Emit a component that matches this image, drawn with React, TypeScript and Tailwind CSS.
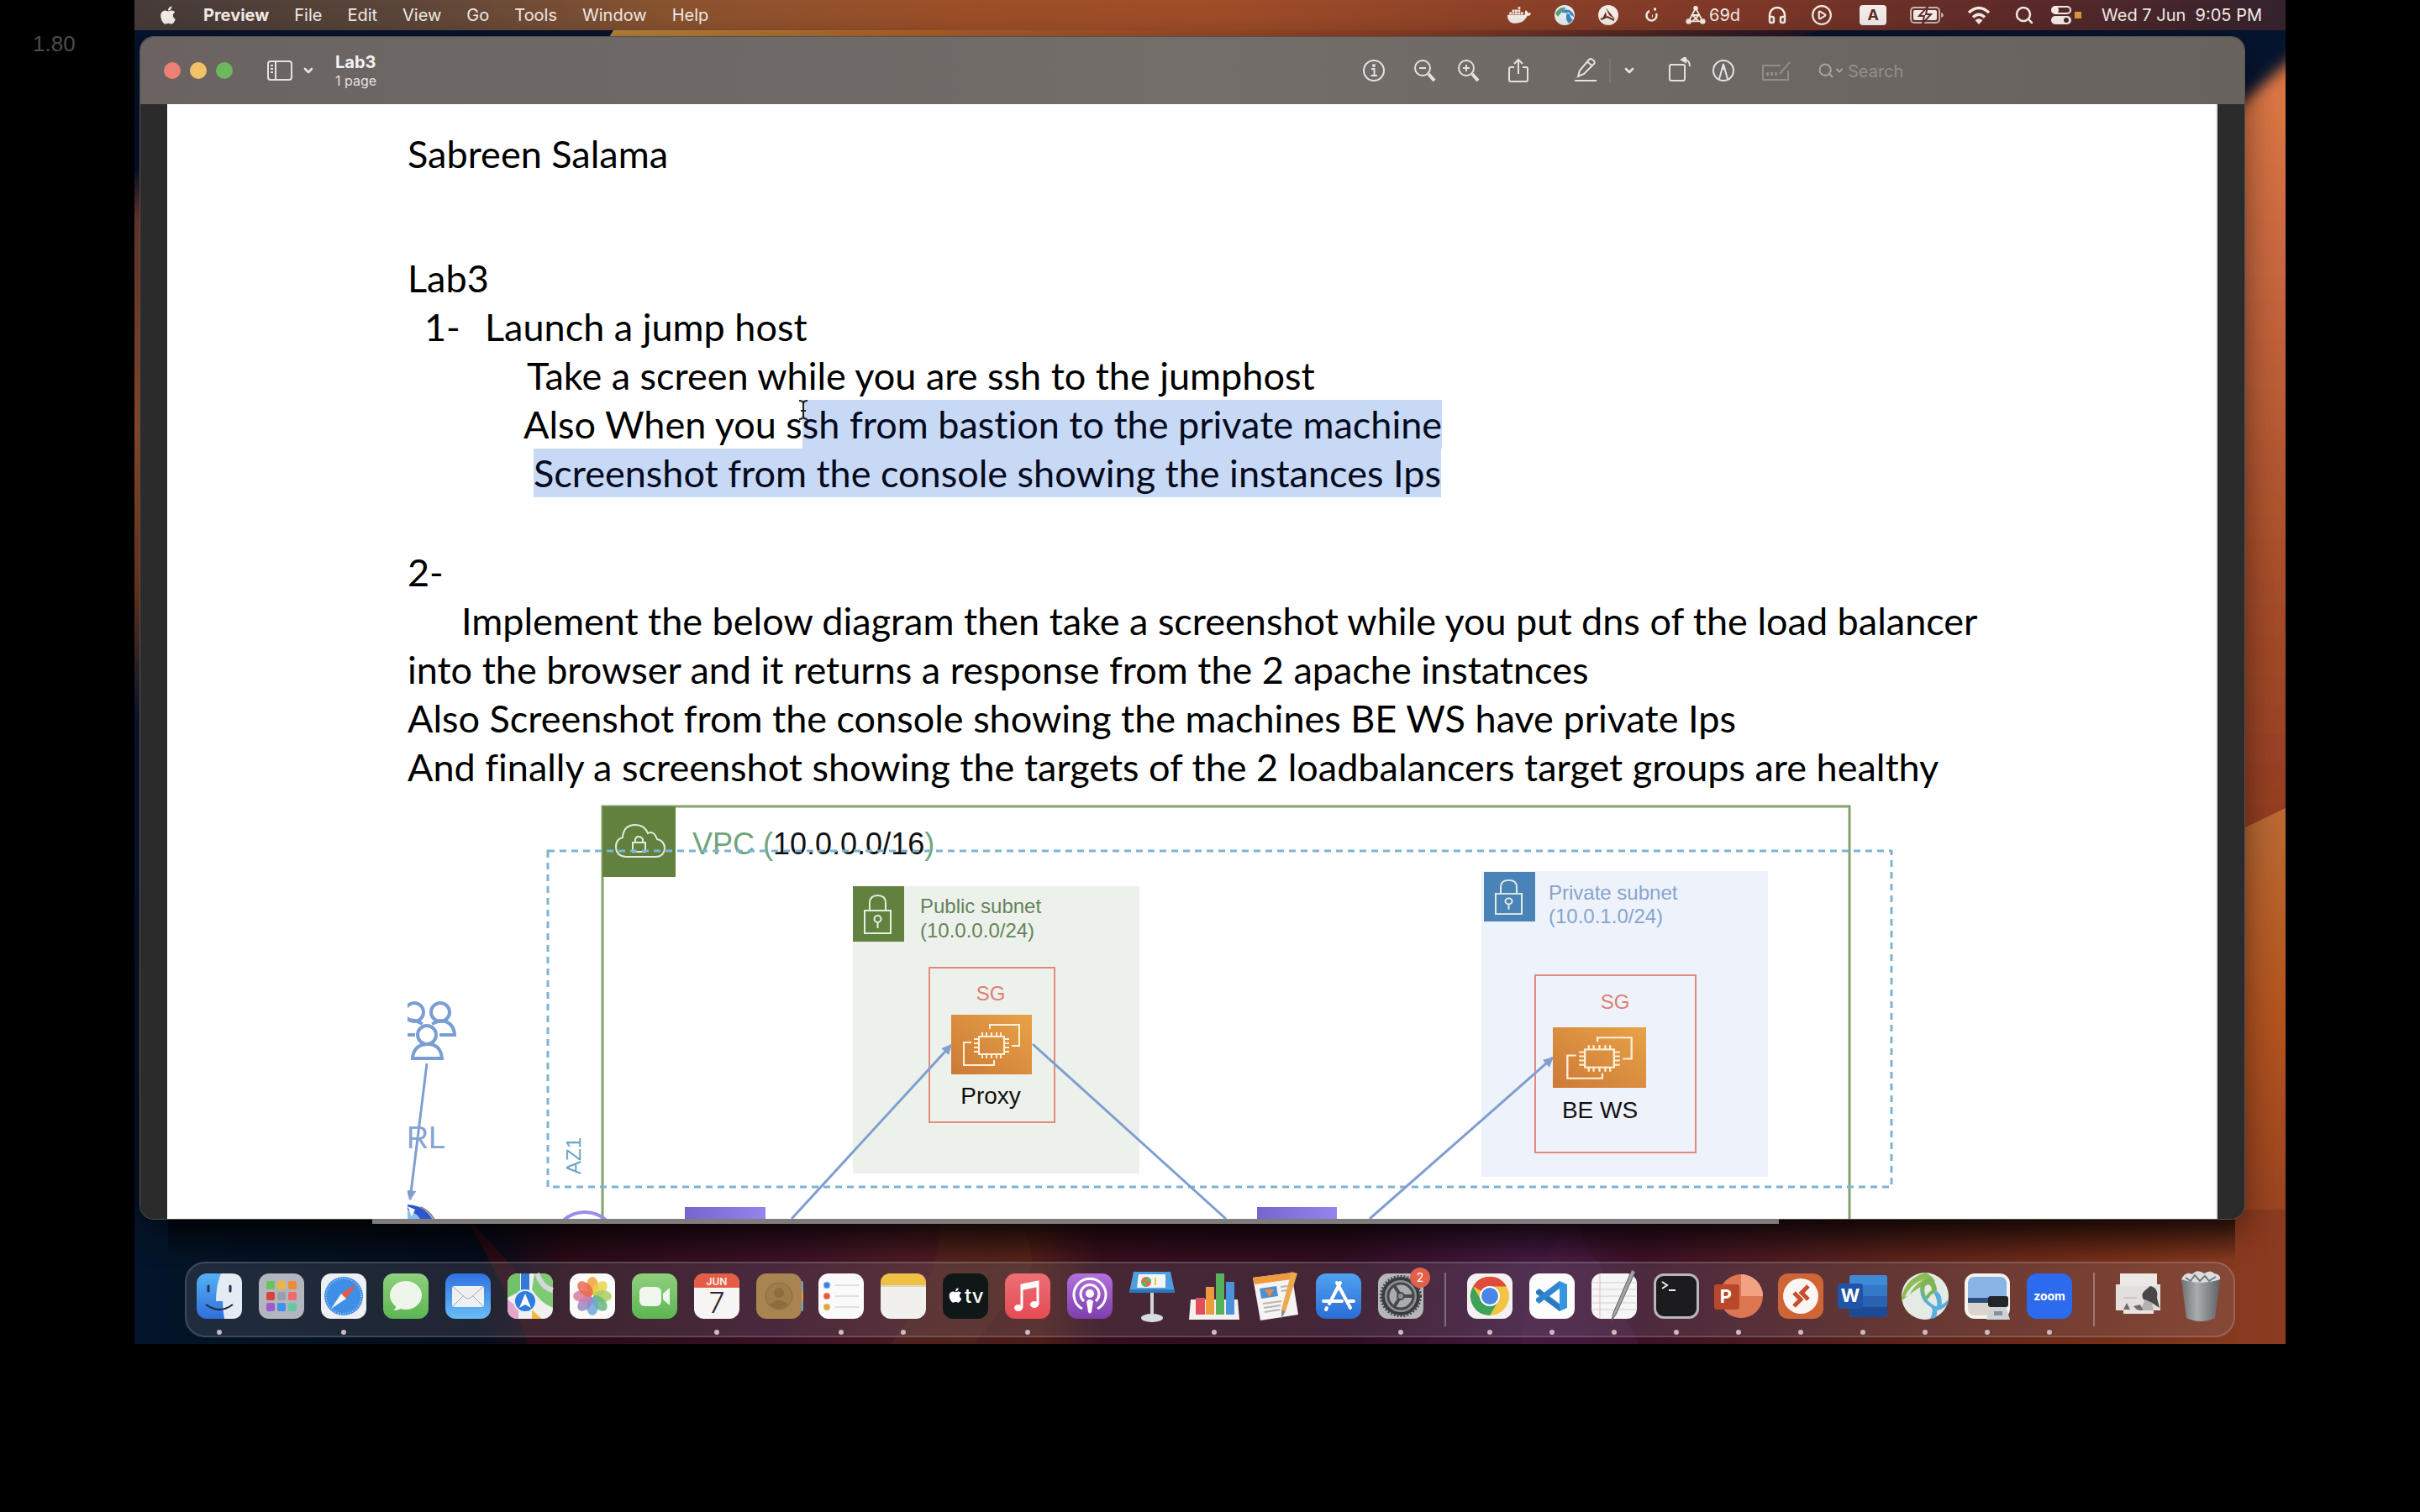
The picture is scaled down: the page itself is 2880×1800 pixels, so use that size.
import type { ReactNode } from 'react';
import { FaApple, FaDocker } from 'react-icons/fa';
import {
  ChevronDown,
  CirclePlay,
  Headphones,
  Search,
} from 'lucide-react';

const menus = ['File', 'Edit', 'View', 'Go', 'Tools', 'Window', 'Help'];

function Wallpaper() {
  return (
    <svg
      className="absolute inset-0 h-full w-full"
      viewBox="0 0 2560 1600"
      preserveAspectRatio="none"
      aria-hidden="true"
    >
      <defs>
        <linearGradient id="wp-left" x1="0" y1="0" x2="0" y2="1">
          <stop offset="0" stopColor="#04142f" />
          <stop offset="0.1" stopColor="#051230" />
          <stop offset="0.14" stopColor="#7a3f35" />
          <stop offset="0.3" stopColor="#a5562f" />
          <stop offset="0.42" stopColor="#7d3f22" />
          <stop offset="0.52" stopColor="#0a1a38" />
          <stop offset="1" stopColor="#04101f" />
        </linearGradient>
        <linearGradient id="wp-right" x1="0" y1="0" x2="0" y2="1">
          <stop offset="0" stopColor="#b8582f" />
          <stop offset="0.06" stopColor="#dc7744" />
          <stop offset="0.25" stopColor="#c96840" />
          <stop offset="0.6" stopColor="#a84f2a" />
          <stop offset="1" stopColor="#8d3620" />
        </linearGradient>
        <linearGradient id="wp-right2" x1="0" y1="0" x2="0" y2="1">
          <stop offset="0" stopColor="#bb6a33" />
          <stop offset="0.4" stopColor="#b3531f" />
          <stop offset="1" stopColor="#893a22" />
        </linearGradient>
        <linearGradient id="wp-bottom" x1="0" y1="0" x2="1" y2="0">
          <stop offset="0" stopColor="#04152a" />
          <stop offset="0.1" stopColor="#04101f" />
          <stop offset="0.16" stopColor="#050c1c" />
          <stop offset="0.2" stopColor="#2a0b16" />
          <stop offset="0.3" stopColor="#3a1125" />
          <stop offset="0.36" stopColor="#4b1a22" />
          <stop offset="0.42" stopColor="#4f1d18" />
          <stop offset="0.45" stopColor="#360e1c" />
          <stop offset="0.56" stopColor="#310d20" />
          <stop offset="0.65" stopColor="#431a40" />
          <stop offset="0.7" stopColor="#3d1126" />
          <stop offset="0.8" stopColor="#56201c" />
          <stop offset="0.92" stopColor="#762e18" />
          <stop offset="1" stopColor="#8b3d22" />
        </linearGradient>
        <linearGradient id="wp-shade" x1="0" y1="0" x2="0" y2="1">
          <stop offset="0" stopColor="#000" stopOpacity="0.7" />
          <stop offset="1" stopColor="#000" stopOpacity="0" />
        </linearGradient>
        <linearGradient id="wp-top" x1="0" y1="0" x2="1" y2="0">
          <stop offset="0" stopColor="#c08a3c" />
          <stop offset="0.3" stopColor="#b4602a" />
          <stop offset="0.7" stopColor="#8a3c26" />
          <stop offset="1" stopColor="#1c1426" />
        </linearGradient>
        <filter id="wp-soft" x="-50%" y="-5%" width="200%" height="110%">
          <feGaussianBlur stdDeviation="8" />
        </filter>
      </defs>
      <rect width="2560" height="1600" fill="#06152f" />
      <path d="M570 36H2010L1900 60H555Z" fill="url(#wp-top)" />
      <rect y="44" width="60" height="1556" fill="url(#wp-left)" />
      <path d="M2440 150L2500 130L2600 40V1100H2440Z" fill="url(#wp-right)" filter="url(#wp-soft)" />
      <path d="M2460 1010L2560 962V1600H2460Z" fill="url(#wp-right2)" />
      <path d="M0 1440H2560V1600H0Z" fill="url(#wp-bottom)" />
      <path d="M2500 1440H2560V1600H2500Z" fill="#8c3a1e" opacity="0.45" />
      <path d="M395 1450Q440 1490 520 1600H470Q440 1530 395 1450Z" fill="#2a0b16" />
      <path d="M900 1600Q960 1520 960 1450H1050Q1070 1480 1068 1510L1000 1600Z" fill="#5a2c18" opacity="0.4" />
      <path d="M1715 1450Q1725 1490 1742 1502L1790 1600H1650Q1660 1500 1715 1450Z" fill="#4a1b44" opacity="0.5" />
      <rect x="40" y="1448" width="2460" height="52" fill="url(#wp-shade)" />
    </svg>
  );
}

function MenuBar() {
  return (
    <header className="relative flex h-9 shrink-0 items-center px-7 pb-px text-xl text-[#f4ece6]">
      <div className="absolute inset-0 flex" aria-hidden="true">
        <div className="flex-1 bg-linear-to-r from-[#463b38] via-[#5c463a] to-[#8a532f]" />
        <div className="flex-1 bg-linear-to-r from-[#8a532f] via-[#9c5028] to-[#a04e28]" />
        <div className="flex-1 bg-linear-to-r from-[#a04e28] to-[#7e3828]" />
        <div className="flex-1 bg-linear-to-r from-[#7e3828] via-[#5d2a29] to-[#33222d]" />
      </div>
      <nav className="relative flex items-center gap-[30px]" aria-label="Menu bar">
        <button aria-label="Apple menu">
          <FaApple size={24} />
        </button>
        <button className="font-bold">Preview</button>
        {menus.map((m) => (
          <button key={m}>
            {m}
          </button>
        ))}
      </nav>
      <div className="relative ml-auto flex items-center">
        <FaDocker size={28} className="mr-7" />
        <svg viewBox="0 0 24 24" className="mr-7 h-6 w-6">
          <circle cx="12" cy="12" r="12" fill="#e6eef0" />
          <path d="M1 10Q6 1 14 3Q8 8 4 14Z" fill="#5f9a72" />
          <path d="M9 7Q17 3 22 10L24 15Q16 8 9 9ZM15 9Q12 17 17 22L22 18Q18 15 18 9Z" fill="#3f86c4" />
        </svg>
        <svg viewBox="0 0 24 24" className="mr-7 h-6 w-6">
          <circle cx="12" cy="12" r="12" fill="#f4ece6" />
          <path d="M9 3L20 17L13 12ZM4 18L9 8L10 13Z" fill="#6a3024" />
          <path d="M3 17L11 14L19 18" fill="none" stroke="#6a3024" strokeWidth="2" />
        </svg>
        <svg viewBox="0 0 24 24" className="mr-7 h-6 w-6">
          <path d="M9 7A6 6 0 1 0 17 10" fill="none" stroke="currentColor" strokeWidth="2.5" />
          <path d="M14 5L17 5M12 13h1" stroke="currentColor" strokeWidth="3" />
        </svg>
        <svg viewBox="0 0 26 24" className="mr-1 h-6 w-6">
          <path
            d="M13 3L4 20H22ZM9 12L17 20M17 12L9 20M9 12H17"
            fill="none"
            stroke="currentColor"
            strokeWidth="2"
          />
          <circle cx="13" cy="3" r="3" fill="currentColor" />
          <circle cx="4" cy="20" r="3.5" fill="currentColor" />
          <circle cx="22" cy="20" r="3.5" fill="currentColor" />
        </svg>
        <span className="mr-8">69d</span>
        <Headphones size={24} strokeWidth={2.5} className="mr-7" />
        <CirclePlay size={26} strokeWidth={2} className="mr-8" />
        <span className="mr-7 flex h-6 w-8 items-center justify-center rounded-sm bg-[#f4ece8] text-lg font-bold text-[#5c2c28]">
          A
        </span>
        <svg viewBox="0 0 40 22" className="mr-7 h-6 w-10">
          <rect x="1" y="2" width="34" height="18" rx="4" fill="none" stroke="currentColor" strokeWidth="2" opacity="0.7" />
          <rect x="4" y="5" width="28" height="12" rx="2" fill="currentColor" />
          <path d="M37 8V14Q40 13 40 11T37 8Z" fill="currentColor" opacity="0.7" />
          <path d="M21 1L11 12H17L15 21L25 10H19Z" fill="currentColor" stroke="#5c2c28" strokeWidth="2" />
        </svg>
        <svg viewBox="0 0 28 24" className="mr-7 h-6 w-7" fill="none" stroke="currentColor" strokeWidth="3.5">
          <path d="M2 9Q14 -2 26 9" />
          <path d="M7 14.500Q14 8 21 14.500" />
          <path d="M14 23L9.500 18Q14 14.500 18.500 18Z" fill="currentColor" stroke="none" />
        </svg>
        <Search size={24} strokeWidth={2.500} className="mr-5" />
        <svg viewBox="0 0 24 24" className="mr-1 h-6 w-6">
          <rect x="1" y="2" width="22" height="8" rx="4" fill="none" stroke="currentColor" strokeWidth="2" />
          <circle cx="5" cy="6" r="4" fill="currentColor" />
          <rect x="0" y="13" width="24" height="10" rx="5" fill="currentColor" />
          <circle cx="18" cy="18" r="3" fill="#4a2629" />
        </svg>
        <span className="mr-6 h-2 w-2 bg-[#d69a3a]" />
        <time className="whitespace-pre">Wed 7 Jun  9:05 PM</time>
      </div>
    </header>
  );
}

function Toolbar() {
  return (
    <div className="flex h-20 shrink-0 items-center bg-linear-to-r from-[#6a6362] via-[#736e6a] to-[#68625e] pl-7 text-[#e4e1df]">
      <div className="flex gap-[11px]">
        <button aria-label="Close" className="h-5 w-5 rounded-full bg-[#ec8074]" />
        <button aria-label="Minimise" className="h-5 w-5 rounded-full bg-[#f3c267]" />
        <button aria-label="Zoom window" className="h-5 w-5 rounded-full bg-[#6db85d]" />
      </div>
      <button aria-label="Sidebar" className="ml-10 flex items-center gap-2.5">
        <svg viewBox="0 0 30 24" className="h-6 w-8" fill="none" stroke="currentColor" strokeWidth="2">
          <rect x="1" y="1" width="28" height="22" rx="3" />
          <path d="M10 1V23M4 6H7M4 10H7M4 14H7" />
        </svg>
        <ChevronDown size={16} strokeWidth={4} />
      </button>
      <div className="ml-6 flex flex-col">
        <h1 className="text-xl leading-6 font-bold text-[#f5f3f2]">Lab3</h1>
        <p className="text-base leading-5">1 page</p>
      </div>
      <div className="ml-auto flex items-center">
        <button aria-label="Info" className="mr-7">
          <svg viewBox="0 0 32 32" className="h-8 w-8" fill="none" stroke="currentColor" strokeWidth="2">
            <circle cx="16" cy="16" r="12" />
            <path d="M13 14H16.500V22M12.500 22H20" />
            <circle cx="16" cy="10" r="1" fill="currentColor" />
          </svg>
        </button>
        <button aria-label="Zoom out" className="mr-5">
          <ToolGlass plus={false} />
        </button>
        <button aria-label="Zoom in" className="mr-7">
          <ToolGlass plus />
        </button>
        <button aria-label="Share" className="mr-12">
          <svg viewBox="0 0 32 32" className="h-8 w-8" fill="none" stroke="currentColor" strokeWidth="2">
            <path d="M11 12H7Q5 12 5 14V27Q5 29 7 29H25Q27 29 27 27V14Q27 12 25 12H21M16 20V3M11 8L16 3L21 8" />
          </svg>
        </button>
        <button aria-label="Highlight" className="mr-3">
          <svg viewBox="0 0 32 32" className="h-8 w-8" fill="none" stroke="currentColor" strokeWidth="2">
            <path d="M7 23L9 16L20 3Q22 1 25 3.500T26 8L14 20ZM18 5.500L23.500 10" />
            <path d="M3 28H29" />
          </svg>
        </button>
        <span className="mr-3.5 h-7 w-0.5 bg-[#7d7875]" />
        <button aria-label="Highlight colours" className="mr-9">
          <ChevronDown size={16} strokeWidth={4} />
        </button>
        <button aria-label="Rotate" className="mr-5">
          <svg viewBox="0 0 32 32" className="h-8 w-8" fill="none" stroke="currentColor" strokeWidth="2">
            <rect x="4" y="9" width="18" height="19" rx="2" />
            <path d="M21 3Q28 3 28 11" />
            <path d="M18 3L23 0V6Z" fill="currentColor" />
          </svg>
        </button>
        <button aria-label="Markup" className="mr-7">
          <svg viewBox="0 0 32 32" className="h-8 w-8" fill="none" stroke="currentColor" strokeWidth="2">
            <circle cx="16" cy="16" r="12" />
            <path d="M11 26L15 12Q16 10 17 12L21 26" />
            <path d="M14.500 14H17.500L16 8Z" fill="currentColor" />
          </svg>
        </button>
        <button aria-label="Fill in form" className="mr-8 text-[#928d89]" disabled>
          <svg viewBox="0 0 36 32" className="h-8 w-9" fill="none" stroke="currentColor" strokeWidth="2">
            <path d="M24 10H3V27H33V16M23 20L35 6" />
            <path d="M7 20H20" strokeWidth="4" strokeDasharray="3 2" />
          </svg>
        </button>
        <label className="flex w-[508px] items-center text-[#a8a39f]">
          <Search size={20} strokeWidth={2.500} />
          <ChevronDown size={12} strokeWidth={4} className="mr-1" />
          <input
            type="search"
            aria-label="Search"
            placeholder="Search"
            className="w-40 bg-transparent pt-0.5 text-xl text-[#a8a39f] outline-none placeholder:text-[#948f8b]"
          />
        </label>
      </div>
    </div>
  );
}

function ToolGlass({ plus }: { plus: boolean }) {
  return (
    <svg viewBox="0 0 32 32" className="h-8 w-8" fill="none" stroke="currentColor" strokeWidth="2">
      <circle cx="14" cy="13" r="9" />
      <path d={plus ? 'M10 13H18M14 9V17' : 'M10 13H18'} />
      <path d="M21 20L28 28" strokeWidth="4" />
    </svg>
  );
}

function Ec2({ x, y, w, h }: { x: number; y: number; w: number; h: number }) {
  return (
    <svg x={x} y={y} width={w} height={h} viewBox="0 0 96 71" preserveAspectRatio="none">
      <rect width="96" height="71" fill="url(#ec2)" />
      <g fill="none" stroke="#fff0d8" strokeWidth="2">
        <rect x="33" y="26" width="30" height="21" />
        <path d="M37 21V26M42 21V26M48 21V26M54 21V26M59 21V26M37 47V52M42 47V52M48 47V52M54 47V52M59 47V52M27 29H33M27 34H33M27 39H33M27 44H33M63 29H69M63 34H69M63 39H69M63 44H69" />
        <path d="M46 17V12H81V37H72M24 33H15V60H51V54" />
      </g>
    </svg>
  );
}

function Lock({ x, y, h, fill }: { x: number; y: number; h: number; fill: string }) {
  return (
    <svg x={x} y={y} width={61} height={h} viewBox="0 0 61 66" preserveAspectRatio="none">
      <rect width="61" height="66" fill={fill} />
      <g fill="none" stroke="#e3efe0" strokeWidth="2">
        <rect x="14" y="29" width="31" height="27" />
        <path d="M20 29V20Q20 11 29.500 11T39 20V29M29.500 43V50" />
        <circle cx="29.500" cy="39" r="4" />
      </g>
    </svg>
  );
}

function Diagram() {
  return (
    <svg
      viewBox="485 944 1800 540"
      className="mt-0.5 block h-[540px] w-[1800px] shrink-0"
      fontFamily="Liberation Sans, Arial, sans-serif"
      role="img"
      aria-label="VPC network diagram"
    >
      <defs>
        <linearGradient id="ec2" x1="0" y1="1" x2="1" y2="0">
          <stop offset="0" stopColor="#cc7a36" />
          <stop offset="1" stopColor="#e8a248" />
        </linearGradient>
        <linearGradient id="elb" x1="0" y1="0" x2="1" y2="0">
          <stop offset="0" stopColor="#7565cc" />
          <stop offset="1" stopColor="#9684ee" />
        </linearGradient>
        <marker id="head" viewBox="0 0 10 10" refX="9" refY="5" markerWidth="16" markerHeight="12" markerUnits="userSpaceOnUse" orient="auto">
          <path d="M0 0L10 5L0 10Z" fill="#7f9fd0" />
        </marker>
      </defs>

      <rect x="1015" y="1055" width="341" height="342" fill="#edf1eb" />
      <rect x="1763" y="1037" width="341" height="364" fill="#eef2fa" />
      <path d="M717 1500V960H2201V1500" fill="none" stroke="#83a26c" strokeWidth="3" />

      <rect x="717" y="960" width="87" height="84" fill="#62813f" />
      <g fill="none" stroke="#e0ecd8" strokeWidth="2">
        <path d="M745 1020Q733 1019 733 1008Q733 999 741 997Q742 982 756 982Q767 982 771 992Q778 988 782 999Q791 1001 791 1010Q790 1020 780 1020Z" />
        <rect x="753" y="1003" width="15" height="11" />
        <path d="M756 1003V999Q757 996 760 996T765 999V1003" />
      </g>
      <text x="824" y="1017" fontSize="36" fill="#6fa57c">
        VPC (<tspan fill="#111">10.0.0.0/16</tspan>)
      </text>
      <rect x="652" y="1013" width="1599" height="400" fill="none" stroke="#7db4d4" strokeWidth="3" strokeDasharray="8 6" />
      <text x="0" y="0" fontSize="24" fill="#6aa3c2" transform="translate(691 1398) rotate(-90)">
        AZ1
      </text>

      <Lock x={1015} y={1055} h={66} fill="#62813f" />
      <g fontSize="24" fill="#64835a">
        <text x="1095" y="1087">Public subnet</text>
        <text x="1095" y="1116">(10.0.0.0/24)</text>
      </g>
      <rect x="1106" y="1152" width="149" height="184" fill="none" stroke="#e58980" strokeWidth="2" />
      <text x="1179" y="1191" fontSize="24" textAnchor="middle" fill="#e07c76">SG</text>
      <Ec2 x={1132} y={1208} w={96} h={71} />
      <text x="1179" y="1314" fontSize="28" textAnchor="middle" fill="#111">Proxy</text>

      <Lock x={1766} y={1038} h={59} fill="#4a83b8" />
      <g fontSize="24" fill="#86a4cf">
        <text x="1843" y="1071">Private subnet</text>
        <text x="1843" y="1099">(10.0.1.0/24)</text>
      </g>
      <rect x="1827" y="1161" width="191" height="211" fill="none" stroke="#e58980" strokeWidth="2" />
      <text x="1922" y="1201" fontSize="24" textAnchor="middle" fill="#e07c76">SG</text>
      <Ec2 x={1848} y={1223} w={111} h={72} />
      <text x="1904" y="1331" fontSize="28" textAnchor="middle" fill="#111">BE WS</text>

      <g stroke="#7f9fd0" strokeWidth="3" fill="none">
        <path d="M942 1451L1132 1244" markerEnd="url(#head)" />
        <path d="M1229 1243L1459 1451" />
        <path d="M1630 1451L1848 1259" markerEnd="url(#head)" />
        <path d="M508 1266L488 1428" markerEnd="url(#head)" />
      </g>
      <rect x="815" y="1437" width="96" height="40" fill="url(#elb)" />
      <rect x="1496" y="1437" width="95" height="40" fill="url(#elb)" />
      <circle cx="696" cy="1481" r="38" fill="none" stroke="#9b8ce8" strokeWidth="4" />

      <g stroke="#7b9ed2" strokeWidth="4" fill="none">
        <circle cx="493" cy="1205" r="11" />
        <circle cx="524" cy="1205" r="11" />
        <circle cx="508" cy="1232" r="11" />
        <path d="M491 1260Q492 1244 508 1243T526 1260ZM523 1232H541Q540 1216 524 1215L514 1219M485 1214L494 1215L503 1219M485 1232H494" />
      </g>
      <text x="484" y="1367" fontSize="36" fill="#86a3d3">RL</text>
      <g>
        <circle cx="485" cy="1468" r="34" fill="#2d56cf" />
        <path d="M485 1440L496 1446L506 1458H485Z" fill="#8cc2f0" />
        <path d="M485 1436L494 1440L490 1448Z" fill="#fff" />
        <path d="M500 1437Q512 1441 519 1456" fill="none" stroke="#8a8a8a" strokeWidth="2" />
      </g>
    </svg>
  );
}

function Mark({ children }: { children: ReactNode }) {
  return <mark className="inline-block bg-[#c8d9f6] text-[#050a1c]">{children}</mark>;
}

function Document() {
  return (
    <div className="flex min-h-0 flex-1 overflow-hidden bg-[#2c2b2c] px-8">
      <article className="flex-1 overflow-hidden border-r-2 border-[#e2e2e2] bg-white pt-[30px] pl-[286px] font-[Lato,sans-serif] text-[45px] leading-[58px] whitespace-nowrap text-black [font-variant-ligatures:none]">
        <p>Sabreen Salama</p>
        <h2 className="mt-[90px]">Lab3</h2>
        <div className="flex pl-5">
          <span className="w-18">1-</span>
          <p>Launch a jump host</p>
        </div>
        <p className="pl-[142px]">Take a screen while you are ssh to the jumphost</p>
        <p className="relative pl-[138px]">
          Also When you s<Mark>sh from bastion to the private machine</Mark>
          <svg viewBox="0 0 14 24" className="absolute top-0 left-[464px] h-6 w-3.5" fill="none" stroke="#222" strokeWidth="2">
            <path d="M2 1Q7 1 7 5Q7 1 12 1M7 4V20M2 23Q7 23 7 19Q7 23 12 23M4 13H10" />
          </svg>
        </p>
        <p className="pl-[150px]">
          <Mark>Screenshot from the console showing the instances Ips</Mark>
        </p>
        <p className="mt-[60px]">2-</p>
        <p className="pl-[64px]">Implement the below diagram then take a screenshot while you put dns of the load balancer</p>
        <p>into the browser and it returns a response from the 2 apache instatnces</p>
        <p>Also Screenshot from the console showing the machines BE WS have private Ips</p>
        <p>And finally a screenshot showing the targets of the 2 loadbalancers target groups are healthy</p>
        <Diagram />
      </article>
    </div>
  );
}

function Tile({ fill, children }: { fill: string; children?: ReactNode }) {
  return (
    <>
      <rect x="5" y="5" width="54" height="54" rx="12" fill={fill} />
      {children}
    </>
  );
}

const petals = ['#f2a23c', '#e9d34a', '#a9cf62', '#63b77c', '#6fa6d8', '#9b86c9', '#d97a9a', '#ea6a4c'];
const launchpad = ['#6cc35a', '#edb63e', '#ee8d35', '#d9443a', '#9aa0aa', '#ee6a6c', '#9d5bd0', '#3f93ee', '#62c9a0'];

type App = { name: string; open?: boolean; badge?: string; art: ReactNode };

const apps: App[] = [
  {
    name: 'Finder',
    open: true,
    art: (
      <Tile fill="url(#d-blue)">
        <path d="M34 5H47Q59 5 59 17V47Q59 59 47 59H38Q36 48 36 38H28Q28 20 34 5Z" fill="#e4ebf3" />
        <path d="M19 20V26M45 20V26" stroke="#1d3552" strokeWidth="3" strokeLinecap="round" />
        <path d="M16 42Q32 54 48 42" fill="none" stroke="#1d2a3c" strokeWidth="2" />
      </Tile>
    ),
  },
  {
    name: 'Launchpad',
    art: (
      <Tile fill="#b3b6be">
        {launchpad.map((c, i) => (
          <rect key={c} x={14 + (i % 3) * 13} y={14 + Math.floor(i / 3) * 13} width="10" height="10" rx="2" fill={c} />
        ))}
      </Tile>
    ),
  },
  {
    name: 'Safari',
    open: true,
    art: (
      <Tile fill="#eeeff1">
        <circle cx="32" cy="32" r="23" fill="#3f8fe6" />
        <circle cx="32" cy="32" r="21" fill="none" stroke="#9cc8f5" strokeWidth="2" strokeDasharray="1 2" />
        <path d="M48 17L35 35L29 29Z" fill="#e8584a" />
        <path d="M17 47L29 29L35 35Z" fill="#f2f4f6" />
      </Tile>
    ),
  },
  {
    name: 'Messages',
    art: (
      <Tile fill="url(#d-green)">
        <ellipse cx="32" cy="31" rx="19" ry="17" fill="#eef6ea" />
        <path d="M20 42Q21 47 17 49Q25 49 28 45Z" fill="#eef6ea" />
      </Tile>
    ),
  },
  {
    name: 'Mail',
    art: (
      <Tile fill="url(#d-mail)">
        <rect x="13" y="20" width="38" height="25" rx="3" fill="#eef1f4" />
        <path d="M14 21L29 34Q32 36 35 34L50 21M14 44L26 32M50 44L38 32" fill="none" stroke="#a2a8b0" strokeWidth="1" />
      </Tile>
    ),
  },
  {
    name: 'Maps',
    art: (
      <Tile fill="#f0f1ee">
        <path d="M5 17Q5 9 12 6L20 5V26L5 34Z" fill="#72c267" />
        <path d="M37 5H47Q59 5 59 17V46Q44 40 34 24Z" fill="#7fcb74" />
        <path d="M40 5Q46 22 59 25" fill="none" stroke="#d5d7da" strokeWidth="6" />
        <path d="M5 36L18 46V59Q5 59 5 47Z" fill="#e4a6cf" />
        <path d="M34 59V48L46 59Z" fill="#f2bb3f" />
        <path d="M21 5H31V30H21Z" fill="#3478d8" />
        <circle cx="26" cy="38" r="13" fill="#2f7be0" stroke="#e9eef5" strokeWidth="2" />
        <path d="M26 29L33 46L26 42L19 46Z" fill="#fff" />
      </Tile>
    ),
  },
  {
    name: 'Photos',
    art: (
      <Tile fill="#fbfbfa">
        {petals.map((c, i) => (
          <ellipse key={c} cx="32" cy="20" rx="7" ry="11" fill={c} opacity="0.85" transform={`rotate(${i * 45} 32 32)`} />
        ))}
      </Tile>
    ),
  },
  {
    name: 'FaceTime',
    art: (
      <Tile fill="url(#d-green)">
        <rect x="14" y="21" width="26" height="23" rx="6" fill="#eff7ec" />
        <path d="M42 29L50 22V43L42 36Z" fill="#eff7ec" />
      </Tile>
    ),
  },
  {
    name: 'Calendar',
    open: true,
    art: (
      <Tile fill="#f7f5f4">
        <path d="M5 22V17Q5 5 17 5H47Q59 5 59 17V22Z" fill="#e35d47" />
        <text x="32" y="19" fontSize="12" fontWeight="700" textAnchor="middle" fill="#fbe5e0">JUN</text>
        <text x="32" y="52" fontSize="34" fontWeight="300" textAnchor="middle" fill="#2d2d2d">7</text>
      </Tile>
    ),
  },
  {
    name: 'Contacts',
    art: (
      <>
        <rect x="50" y="14" width="11" height="36" rx="2" fill="#6aa6bd" />
        <rect x="50" y="26" width="11" height="12" fill="#d99a42" />
        <Tile fill="#a78450">
          <circle cx="32" cy="32" r="16" fill="#a07c48" stroke="#8e6d3c" strokeWidth="1" />
          <circle cx="32" cy="28" r="6" fill="#8e6d3c" />
          <path d="M21 42Q32 32 43 42Q32 52 21 42Z" fill="#8e6d3c" />
        </Tile>
      </>
    ),
  },
  {
    name: 'Reminders',
    open: true,
    art: (
      <Tile fill="#fbfafa">
        <path d="M25 19H53M25 32H53M25 45H53" stroke="#c5c5c8" strokeWidth="1" />
        <circle cx="15" cy="19" r="4" fill="#3b82e8" stroke="#a9c8f4" strokeWidth="1" />
        <circle cx="15" cy="32" r="4" fill="#e0593f" stroke="#f0b2a5" strokeWidth="1" />
        <circle cx="15" cy="45" r="4" fill="#e0a53f" stroke="#f0d2a0" strokeWidth="1" />
      </Tile>
    ),
  },
  {
    name: 'Notes',
    open: true,
    art: (
      <Tile fill="#f2f0ed">
        <path d="M5 19V17Q5 5 17 5H47Q59 5 59 17V19Z" fill="#f0c045" />
        <path d="M5 20H59" stroke="#c9c0a8" strokeWidth="1" />
      </Tile>
    ),
  },
  {
    name: 'TV',
    art: (
      <Tile fill="#101817">
        <FaApple x={10} y={21} size={20} color="#fff" />
        <text x="31" y="40" fontSize="24" fontWeight="500" fill="#fff">tv</text>
      </Tile>
    ),
  },
  {
    name: 'Music',
    open: true,
    art: (
      <Tile fill="url(#d-music)">
        <path d="M25 46V19L44 15V42" fill="none" stroke="#fff" strokeWidth="3" />
        <path d="M25 19L44 15V21L25 25Z" fill="#fff" />
        <ellipse cx="21" cy="46" rx="5" ry="4" fill="#fff" />
        <ellipse cx="40" cy="42" rx="5" ry="4" fill="#fff" />
      </Tile>
    ),
  },
  {
    name: 'Podcasts',
    art: (
      <Tile fill="url(#d-pod)">
        <g fill="none" stroke="#fff" strokeWidth="3">
          <path d="M23 47A19 19 0 1 1 41 47" />
          <path d="M25 38A11 11 0 1 1 39 38" />
        </g>
        <circle cx="32" cy="29" r="5" fill="#fff" />
        <path d="M28 38Q32 34 36 38L34 51Q32 54 30 51Z" fill="#fff" />
      </Tile>
    ),
  },
  {
    name: 'Keynote',
    art: (
      <>
        <path d="M30 26H34V58H30Z" fill="#cfd3da" />
        <ellipse cx="32" cy="58" rx="13" ry="5" fill="#d8dce4" />
        <path d="M10 3H54L59 27H5Z" fill="#4f9fe0" />
        <path d="M5 24H59V28H5Z" fill="#2d76b8" />
        <path d="M16 6H48V22H14Z" fill="#f4f6f8" />
        <circle cx="25" cy="15" r="6" fill="#e5674f" />
        <path d="M25 15V9A6 6 0 0 1 31 15ZM25 15V21A6 6 0 0 1 19 15Z" fill="#5eb36a" />
        <path d="M36 10V19" stroke="#edc64a" strokeWidth="2" />
      </>
    ),
  },
  {
    name: 'Numbers',
    open: true,
    art: (
      <>
        <path d="M4 36H60L62 60H2Z" fill="#f3f1f0" />
        <path d="M10 34H21V54H10Z" fill="#e0505c" />
        <path d="M22 21H32V54H22Z" fill="#ee9a3c" />
        <path d="M34 5H44V54H34Z" fill="#56b35c" />
        <path d="M46 15H56V54H46Z" fill="#4a92dc" />
      </>
    ),
  },
  {
    name: 'Pages',
    art: (
      <>
        <path d="M4 10L50 4L58 54L13 61Z" fill="#f5f4f2" />
        <path d="M4 10L50 4L51 12L6 18Z" fill="#ee9a3e" />
        <path d="M12 23L32 20L34 32L14 35Z" fill="#4a8fd8" />
        <path d="M18 24H29L24 33Z" fill="#ee8b34" />
        <path d="M37 21L46 20M38 26L45 25M16 41L38 38M17 46L37 43M18 51L36 48" stroke="#b8b6b3" strokeWidth="2" />
        <path d="M50 3L57 5L43 50L38 48Z" fill="#ecaa4e" />
        <path d="M43 50L38 48L38 59Z" fill="#8b9098" />
      </>
    ),
  },
  {
    name: 'App Store',
    art: (
      <Tile fill="url(#d-store)">
        <path d="M34 16L21 41M18 46L17 48M30 16L46 46M14 38H36M43 38H50" stroke="#fff" strokeWidth="4" strokeLinecap="round" />
      </Tile>
    ),
  },
  {
    name: 'System Settings',
    open: true,
    badge: '2',
    art: (
      <Tile fill="#b5b6b8">
        <circle cx="32" cy="32" r="21" fill="#8f9194" stroke="#3a3c3f" strokeWidth="4" />
        <circle cx="32" cy="32" r="24" fill="none" stroke="#3a3c3f" strokeWidth="2" strokeDasharray="2 2" />
        <circle cx="32" cy="32" r="15" fill="#a9abad" stroke="#46484b" strokeWidth="3" />
        <path d="M32 32L47 32M32 32L24 19M32 32L24 45" stroke="#46484b" strokeWidth="4" />
        <circle cx="32" cy="32" r="4" fill="#8f9194" stroke="#46484b" strokeWidth="2" />
      </Tile>
    ),
  },
];

const openApps: App[] = [
  {
    name: 'Chrome',
    open: true,
    art: (
      <Tile fill="#f3f2f1">
        <circle cx="32" cy="32" r="23" fill="#f2c443" />
        <path d="M12 20.500A23 23 0 0 1 52 20.500H32A11.500 11.500 0 0 0 22 26Z" fill="#df4c3e" />
        <path d="M12 20.500A23 23 0 0 0 32 55L42 38A11.500 11.500 0 0 1 22 37.500Z" fill="#3ea25a" />
        <circle cx="32" cy="32" r="11" fill="#4a86e8" stroke="#fff" strokeWidth="2" />
      </Tile>
    ),
  },
  {
    name: 'Visual Studio Code',
    open: true,
    art: (
      <Tile fill="#fdfdfd">
        <path d="M41 14L50 18V46L41 50L20 31Z" fill="#3794de" />
        <path d="M13 26L17 23L41 43V50L13 29Z" fill="#2b78bd" />
        <path d="M13 38L17 41L41 21V14L13 35Z" fill="#2f86cf" />
        <path d="M41 23V41L29 32Z" fill="#fdfdfd" />
      </Tile>
    ),
  },
  {
    name: 'TextEdit',
    open: true,
    art: (
      <Tile fill="#f7f6f6">
        <path d="M6 16H58M6 24H58M6 32H58M6 40H58M6 48H58" stroke="#cfcccc" strokeWidth="1" />
        <path d="M15 6V58" stroke="#e6b8b8" strokeWidth="1" />
        <path d="M53 1L57 3L34 54L29 61L31 52Z" fill="#a3a5a8" stroke="#5b5d60" strokeWidth="1" />
      </Tile>
    ),
  },
  {
    name: 'Terminal',
    open: true,
    art: (
      <Tile fill="#b8b6b9">
        <rect x="8" y="8" width="48" height="48" rx="9" fill="#1c1b1d" />
        <path d="M15 15L21 19L15 23M23 25H31" fill="none" stroke="#eee" strokeWidth="2" />
      </Tile>
    ),
  },
  {
    name: 'PowerPoint',
    open: true,
    art: (
      <>
        <circle cx="35" cy="32" r="26" fill="#dc7650" />
        <path d="M35 6A26 26 0 0 1 61 32H35Z" fill="#f0a282" />
        <rect x="3" y="18" width="30" height="30" rx="3" fill="#b9482a" />
        <text x="17" y="40" fontSize="22" fontWeight="700" textAnchor="middle" fill="#fff">P</text>
      </>
    ),
  },
  {
    name: 'Remote Desktop',
    open: true,
    art: (
      <Tile fill="#cf6436">
        <circle cx="32" cy="32" r="21" fill="#fbf6f3" />
        <path d="M24 28L32 36L24 44M41 20L33 28L41 36" fill="none" stroke="#c64f2c" strokeWidth="5" />
      </Tile>
    ),
  },
  {
    name: 'Word',
    open: true,
    art: (
      <>
        <rect x="16" y="7" width="45" height="50" rx="3" fill="#3f8ad8" />
        <path d="M16 19H61V32H16Z" fill="#3478c8" />
        <path d="M16 32H61V45H16Z" fill="#2a62b2" />
        <path d="M16 45H61V54Q61 57 58 57H19Q16 57 16 54Z" fill="#1d4a94" />
        <rect x="2" y="17" width="30" height="30" rx="3" fill="#1f54a8" />
        <text x="17" y="39" fontSize="22" fontWeight="700" textAnchor="middle" fill="#fff">W</text>
      </>
    ),
  },
  {
    name: 'AnyConnect',
    open: true,
    art: (
      <>
        <circle cx="32" cy="32" r="28" fill="#e4ebe4" />
        <path d="M4 34Q9 10 33 4Q40 8 44 14Q26 18 4 38Z" fill="#8dbb55" />
        <path d="M8 33Q14 18 30 12Q18 20 13 31Z" fill="#e4ebe4" />
        <path d="M38 8Q46 16 46 26Q40 28 32 40Q24 30 27 18Z" fill="#7fb558" />
        <path d="M36 18Q40 20 40 25Q36 27 33 32Q30 26 32 20Z" fill="#e4ebe4" />
        <path d="M27 22Q32 38 44 44Q52 44 60 36L59 41Q52 49 46 49Q47 54 44 58L38 59Q42 50 40 46Q26 38 27 22Z" fill="#5aaedb" />
        <path d="M46 26Q54 32 51 46L46 48Q48 36 42 28Z" fill="#5aaedb" />
      </>
    ),
  },
  {
    name: 'Preview',
    open: true,
    art: (
      <Tile fill="#f6f2ec">
        <path d="M9 17Q9 9 17 9H47Q55 9 55 17V34H9Z" fill="#8ab4e4" />
        <path d="M9 34H55V40H9Z" fill="#2f4f80" />
        <path d="M9 40H55V47Q55 55 47 55H17Q9 55 9 47Z" fill="#d9d4cc" />
        <path d="M36 44H54L59 60H31Z" fill="#cdd3d8" />
        <rect x="33" y="32" width="24" height="13" rx="3" fill="#22252a" />
        <path d="M40 50H50V55H40Z" fill="#8a9096" />
      </Tile>
    ),
  },
  {
    name: 'Zoom',
    open: true,
    art: (
      <Tile fill="#2d6bee">
        <text x="32" y="37" fontSize="14" fontWeight="700" textAnchor="middle" fill="#fff">zoom</text>
      </Tile>
    ),
  },
];

const trailing: App[] = [
  {
    name: 'Downloads',
    art: (
      <>
        <path d="M10 5H54V46H10Z" fill="#efebe7" />
        <path d="M30 5V20H54" fill="none" stroke="#cbc6c2" strokeWidth="1" />
        <path d="M5 18H58V49H5Z" fill="#e3dfdc" />
        <path d="M10 5H54V20H10Z" fill="#ece8e4" />
        <path d="M46 20Q56 22 54 34L57 46L48 40L38 36Q34 30 40 25Z" fill="#4a4647" />
        <path d="M40 36L48 40L50 49H34Z" fill="#b5b0b0" />
        <path d="M14 48L18 40L22 48ZM26 44L34 42L38 50L30 48Z" fill="#6f6a6c" />
        <path d="M14 34H30" stroke="#c9a5a5" strokeWidth="1" />
        <path d="M14 49H50V53H14Z" fill="#e9e5e2" />
      </>
    ),
  },
  {
    name: 'Bin',
    art: (
      <>
        <path d="M9 12H55L49 58Q32 66 15 58Z" fill="url(#d-bin)" />
        <path d="M9 12Q14 2 22 6Q28 -1 36 5Q44 0 48 5Q56 6 55 12Q32 20 9 12Z" fill="#dcdddd" />
        <path d="M14 10L20 14L25 7L31 14L37 8L42 14L50 9" fill="none" stroke="#77797c" strokeWidth="2" />
      </>
    ),
  },
];

function DockGroup({ items }: { items: App[] }) {
  return (
    <>
      {items.map((a) => (
        <li key={a.name} className="w-[74px]">
          <button aria-label={a.name} className="relative flex w-full flex-col items-center">
            <svg viewBox="0 0 64 64" className="h-16 w-16 overflow-visible" aria-hidden="true">
              {a.art}
            </svg>
            {a.badge && (
              <span className="absolute -top-0.5 right-0.5 flex h-6 w-6 items-center justify-center rounded-full bg-[#e2604a] text-sm text-white">
                {a.badge}
              </span>
            )}
            {a.open && <span className="mt-2 h-1.5 w-1.5 rounded-full bg-[#cdb9c0]" />}
          </button>
        </li>
      ))}
    </>
  );
}

function Dock() {
  return (
    <footer className="relative mx-[60px] mb-2 flex h-[90px] shrink-0 justify-between rounded-3xl border-2 border-white/15 bg-[#8c8c9a]/20 px-0.5 pt-[7px]">
      <svg className="absolute h-0 w-0" aria-hidden="true">
        <defs>
          <linearGradient id="d-blue" x1="0" y1="0" x2="0" y2="1">
            <stop offset="0" stopColor="#55b2f2" />
            <stop offset="1" stopColor="#2f6fdc" />
          </linearGradient>
          <linearGradient id="d-green" x1="0" y1="0" x2="0" y2="1">
            <stop offset="0" stopColor="#8fd07e" />
            <stop offset="1" stopColor="#5cb651" />
          </linearGradient>
          <linearGradient id="d-mail" x1="0" y1="0" x2="0" y2="1">
            <stop offset="0" stopColor="#2f71e0" />
            <stop offset="1" stopColor="#69bdf6" />
          </linearGradient>
          <linearGradient id="d-music" x1="0" y1="0" x2="0" y2="1">
            <stop offset="0" stopColor="#ee6f74" />
            <stop offset="1" stopColor="#e64a55" />
          </linearGradient>
          <linearGradient id="d-pod" x1="0" y1="0" x2="0" y2="1">
            <stop offset="0" stopColor="#b271dc" />
            <stop offset="1" stopColor="#7d3fae" />
          </linearGradient>
          <linearGradient id="d-store" x1="0" y1="0" x2="0" y2="1">
            <stop offset="0" stopColor="#4fa2f0" />
            <stop offset="1" stopColor="#2b6cd6" />
          </linearGradient>
          <linearGradient id="d-bin" x1="0" y1="0" x2="1" y2="0">
            <stop offset="0" stopColor="#6d7174" />
            <stop offset="0.4" stopColor="#a9adb0" />
            <stop offset="1" stopColor="#5f6366" />
          </linearGradient>
        </defs>
      </svg>
      <ul className="flex">
        <DockGroup items={apps} />
      </ul>
      <span className="mt-1 h-16 w-0.5 bg-white/30" />
      <ul className="flex">
        <DockGroup items={openApps} />
      </ul>
      <span className="mt-1 h-16 w-0.5 bg-white/30" />
      <ul className="flex">
        <DockGroup items={trailing} />
      </ul>
    </footer>
  );
}

export default function App() {
  return (
    <div className="relative flex h-screen flex-col bg-black px-40 pb-[200px] font-[Inter,sans-serif]">
      <span className="absolute top-9 left-[39px] font-['Liberation_Sans',sans-serif] text-[26px] leading-8 text-[#4c4c4c]">1.80</span>
      <div className="relative flex min-h-0 flex-1 flex-col overflow-hidden">
        <Wallpaper />
        <MenuBar />
        <main className="relative mt-2 mr-[49px] ml-[7px] flex min-h-0 flex-1 flex-col overflow-hidden rounded-2xl shadow-[0_0_0_1px_#55504e,0_10px_40px_rgba(0,0,0,0.5)]">
          <Toolbar />
          <Document />
        </main>
        <div className="relative mr-[603px] mb-[45px] ml-[283px] h-1.5 shrink-0 bg-[#7f7c7c]" />
        <Dock />
      </div>
    </div>
  );
}
